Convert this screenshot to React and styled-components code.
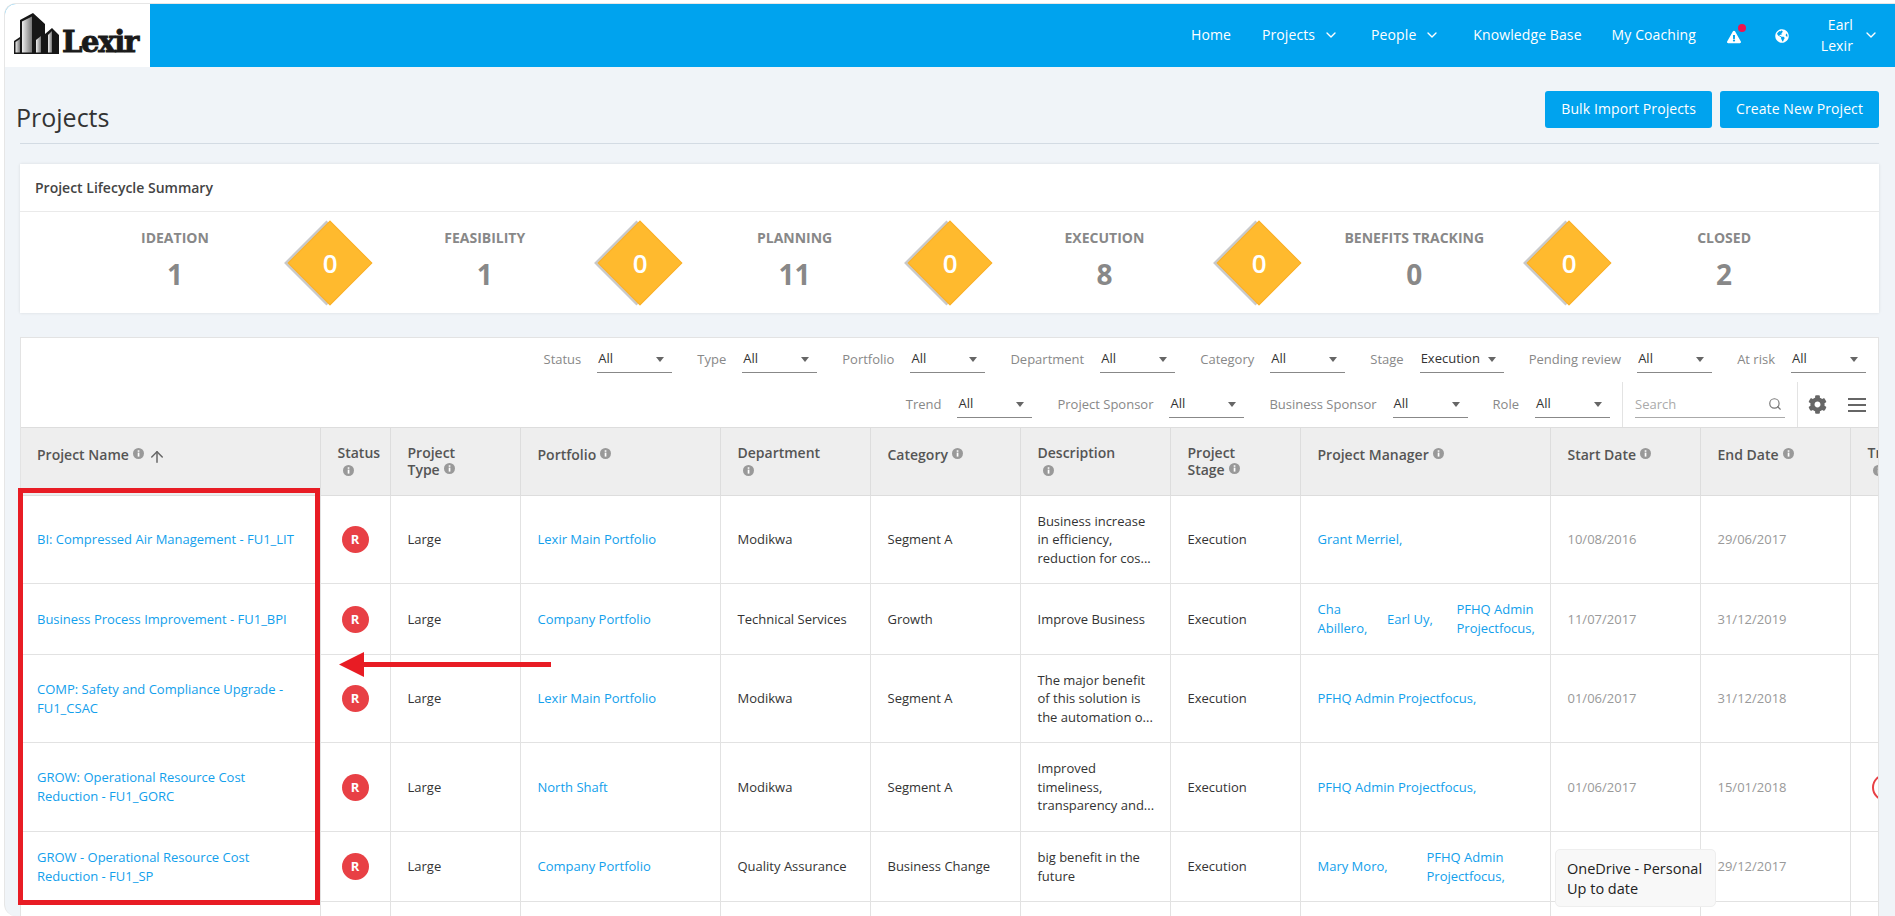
import React from "react";
import styled, { createGlobalStyle } from "styled-components";
import { ChevronDown, ArrowUp, Search } from "lucide-react";
import { FaCog, FaExclamationTriangle, FaGlobeAmericas } from "react-icons/fa";

const Global = createGlobalStyle`
  html, body { margin: 0; padding: 0; height: 916px; overflow: hidden; background: #fff; }
  body { font-family: "Open Sans", "Noto Sans", sans-serif; color: #333; }
  * { box-sizing: border-box; }
`;

const Root = styled.div`
  position: relative;
  width: 1895px;
  height: 916px;
  overflow: hidden;
  background: #fff;
  padding: 3px 0 0 4px;
`;
const Frame = styled.div`
  height: 913px;
  background: #f0f4f8;
  border-left: 1px solid #e6e6e6;
  border-top: 1px solid #e6e6e6;
  border-radius: 12px 0 0 12px;
  overflow: hidden;
`;
const TopBar = styled.header`
  height: 63px;
  display: flex;
  align-items: center;
  background: #00a3ee;
`;
const LogoBox = styled.div`
  width: 145px;
  height: 63px;
  background: #fff;
  display: flex;
  align-items: flex-end;
  padding: 0 0 12px 9px;
  gap: 2px;
`;
const LogoWord = styled.span`
  font-family: "DejaVu Serif", serif;
  font-weight: 700;
  font-size: 29px;
  line-height: 26px;
  color: #1a1a1a;
  -webkit-text-stroke: 0.9px #1a1a1a;
  letter-spacing: -1.3px;
`;
const Nav = styled.nav`
  margin-left: auto;
  display: flex;
  align-items: center;
  color: #fff;
  font-size: 14px;
  font-weight: 500;
  letter-spacing: 0.1px;
  height: 100%;
`;
const NavItem = styled.span`
  display: inline-flex;
  align-items: center;
  margin-top: -2px;
  margin-right: ${(p) => p.$mr}px;
  gap: ${(p) => p.$gap || 0}px;
  white-space: nowrap;
`;
const GlobeSlot = styled.span`
  display: inline-flex;
  margin-top: 1px;
  margin-right: 28px;
`;
const AlertWrap = styled.span`
  position: relative;
  display: inline-flex;
  margin-right: 34px;
  margin-top: 2px;
`;
const AlertDot = styled.span`
  position: absolute;
  width: 8px;
  height: 8px;
  border-radius: 50%;
  background: #f0134d;
  top: -6px;
  right: -5px;
`;
const UserName = styled.span`
  display: block;
  text-align: right;
  line-height: 21px;
  width: 36px;
  margin-top: -1px;
  margin-right: 10px;
`;
const ChevronSlot = styled.span`
  display: inline-flex;
  margin-top: -2px;
  margin-right: 16px;
`;
const Main = styled.main`
  padding: 0 16px 0 15px;
`;
const PageHead = styled.div`
  height: 77px;
  display: flex;
  justify-content: space-between;
  padding-top: 24px;
  border-bottom: 1px solid #d3dbe3;
`;
const Title = styled.h1`
  margin: 10px 0 0 -4px;
  font-size: 25px;
  font-weight: 400;
  line-height: 32px;
  color: #333;
`;
const Actions = styled.div`
  display: flex;
  gap: 8px;
`;
const ActionButton = styled.button`
  height: 37px;
  padding: 0 16px 2px;
  border: 0;
  border-radius: 3px;
  background: #00a3ee;
  color: #fff;
  font: 500 14px "Open Sans", sans-serif;
  letter-spacing: 0.1px;
  white-space: nowrap;
`;
const SummaryCard = styled.section`
  margin-top: 20px;
  height: 149px;
  background: #fff;
  box-shadow: 0 0 3px rgba(0, 0, 0, 0.1);
`;
const SummaryHead = styled.div`
  height: 48px;
  border-bottom: 1px solid #eaeaea;
  padding-left: 15px;
  font-size: 14px;
  font-weight: 600;
  color: #444;
  display: flex;
  align-items: center;
`;
const StageGrid = styled.div`
  display: grid;
  grid-template-columns: repeat(6, 1fr);
  height: 100px;
`;
const Stage = styled.div`
  position: relative;
  text-align: center;
  padding-top: 16px;
`;
const StageLabel = styled.div`
  font-size: 14px;
  font-weight: 700;
  line-height: 20px;
  color: #888;
`;
const StageCount = styled.div`
  margin-top: 6px;
  font-size: 28px;
  font-weight: 700;
  line-height: 40px;
  color: #888;
`;
const Diamond = styled.div`
  position: absolute;
  top: 21px;
  right: -30px;
  width: 60px;
  height: 60px;
  z-index: 1;
  transform: rotate(45deg);
  background: #ffba2e;
  border: 1px solid #fbb02a;
  box-shadow: -2.5px 2.5px 0 #c9c9c9;
  display: flex;
  align-items: center;
  justify-content: center;
`;
const DiamondValue = styled.span`
  transform: rotate(-45deg);
  color: #fff;
  font-size: 26px;
  font-weight: 600;
  line-height: 1;
`;
const TableCard = styled.section`
  margin-top: 24px;
  height: 600px;
  background: #fff;
  border: 1px solid #e3e3e3;
  border-bottom: 0;
  overflow: hidden;
`;
const FilterRow = styled.div`
  height: ${(p) => p.$h}px;
  display: flex;
  justify-content: flex-end;
  padding: 0 12px 0 0;
  font-size: 13px;
`;
const Filter = styled.div`
  display: flex;
  align-items: center;
  height: 28px;
  margin: ${(p) => p.$top}px 0 0 25px;
`;
const FilterLabel = styled.span`
  color: #888;
  margin-right: 16px;
  white-space: nowrap;
`;
const Select = styled.div`
  position: relative;
  width: ${(p) => p.$w || 75}px;
  height: 28px;
  border-bottom: 1px solid #888;
  color: #333;
  line-height: 27px;
  padding-left: 1px;
  &::after {
    content: "";
    position: absolute;
    right: 8px;
    top: 12px;
    border-left: 4.5px solid transparent;
    border-right: 4.5px solid transparent;
    border-top: 5px solid #666;
  }
`;
const ToolGroup = styled.div`
  display: flex;
  align-items: center;
  height: 45px;
  border-left: 1px solid #e3e3e3;
  margin-left: 12px;
  padding-left: ${(p) => p.$pl}px;
  gap: ${(p) => p.$gap || 0}px;
`;
const SearchBox = styled.div`
  width: 150px;
  height: 28px;
  margin-top: -1px;
  padding: 1px 3px 0 0;
  border-bottom: 1px solid #aaa;
  color: #aaa;
  display: flex;
  align-items: center;
  justify-content: space-between;
  font-size: 13px;
`;
const Hamburger = styled.span`
  display: block;
  width: 18px;
  height: 14px;
  border-top: 2px solid #666;
  border-bottom: 2px solid #666;
  position: relative;
  &::after {
    content: "";
    position: absolute;
    left: 0;
    right: 0;
    top: 4px;
    height: 2px;
    background: #666;
  }
`;
const TableScroll = styled.div`
  margin-left: -1px;
`;
const Table = styled.table`
  border-collapse: collapse;
  table-layout: fixed;
  width: 1980px;
  font-size: 13px;
  line-height: 18.6px;
`;
const HeadCell = styled.th`
  height: 68px;
  background: #eee;
  border: 1px solid #ddd;
  padding: ${(p) => (p.$single ? "18px" : "16px")} 17px 0;
  vertical-align: top;
  text-align: left;
  font-size: 14px;
  font-weight: 600;
  line-height: 17px;
  color: #555;
  &:first-child { border-left: 0; }
`;
const Cell = styled.td`
  border: 1px solid #e2e2e2;
  padding: 0 ${(p) => (p.$tight ? 13 : 17)}px 0 17px;
  vertical-align: middle;
  color: ${(p) => (p.$muted ? "#999" : "#333")};
  &:first-child { border-left: 0; }
`;
const Row = styled.tr`
  height: ${(p) => p.$h}px;
`;
const TextLink = styled.a`
  color: #12a0ec;
  text-decoration: none;
`;
const InfoDot = styled.svg`
  width: 11px;
  height: 11px;
  margin-left: ${(p) => (p.$wrapped ? 5 : 4)}px;
  vertical-align: ${(p) => (p.$wrapped ? "-1px" : "1px")};
`;
const SortIcon = styled(ArrowUp)`
  margin: -3px 0 -3px 4px;
  vertical-align: -3px;
  color: #666;
`;
const StatusBadge = styled.span`
  display: flex;
  width: 27px;
  height: 27px;
  border-radius: 50%;
  background: #e84045;
  color: #fff;
  font-size: 13px;
  font-weight: 700;
  align-items: center;
  justify-content: center;
  margin-left: 4px;
`;
const TrendRing = styled.span`
  display: block;
  width: 27px;
  height: 27px;
  border-radius: 50%;
  border: 2px solid #e84045;
  margin-left: 4px;
`;
const Managers = styled.div`
  display: grid;
  grid-template-columns: ${(p) => p.$cols};
  align-items: center;
`;
const Callout = styled.div`
  position: absolute;
  left: 18px;
  top: 488px;
  width: 302px;
  height: 417px;
  border: 5px solid #e81c24;
  pointer-events: none;
`;
const CalloutArrow = styled.svg`
  position: absolute;
  left: 339px;
  top: 652px;
  width: 212px;
  height: 25px;
`;
const Toast = styled.div`
  position: absolute;
  left: 1555px;
  top: 849px;
  width: 161px;
  height: 58px;
  padding: 9px 11px;
  background: #f8f8f8;
  border: 1px solid #eee;
  border-radius: 5px;
  color: #222;
  font-size: 14.5px;
  line-height: 20px;
  white-space: nowrap;
`;

const Info = ({ wrapped }) => (
  <InfoDot $wrapped={wrapped} viewBox="0 0 11 11">
    <circle cx="5.5" cy="5.5" r="5.5" fill="#999" />
    <rect x="4.7" y="4.6" width="1.7" height="4" fill="#fff" />
    <rect x="4.7" y="2.3" width="1.7" height="1.5" fill="#fff" />
  </InfoDot>
);

const LogoMark = () => (
  <svg width="46" height="42" viewBox="0 0 46 42">
    <defs>
      <linearGradient id="face" x1="0" y1="0" x2="1" y2="0">
        <stop offset="0" stopColor="#eee" />
        <stop offset="1" stopColor="#777" />
      </linearGradient>
    </defs>
    <path d="M0 28 L6 24 V7 L19 0 L31 11 V21 L38 15 L45 22 V41 H0Z" fill="#161616" />
    <path d="M1.5 29 L6 26 V39.5 H1.5Z" fill="url(#face)" />
    <path d="M8 8.5 L18 3.5 V39.5 H8Z" fill="url(#face)" />
    <path d="M22 27 L27 23 V39.5 H22Z" fill="url(#face)" />
    <path d="M34 22 L38 18 V39.5 H34Z" fill="url(#face)" />
  </svg>
);

const stages = [
  ["IDEATION", 1],
  ["FEASIBILITY", 1],
  ["PLANNING", 11],
  ["EXECUTION", 8],
  ["BENEFITS TRACKING", 0],
  ["CLOSED", 2],
];

const widths = [300, 70, 130, 200, 150, 150, 150, 130, 250, 150, 150, 150];

const PFHQ = "PFHQ Admin Projectfocus,";
const rows = [
  { h: 88, name: "BI: Compressed Air Management - FU1_LIT", portfolio: "Lexir Main Portfolio", dept: "Modikwa", cat: "Segment A", desc: "Business increase in efficiency, reduction for cos...", mgr: ["Grant Merriel,"], cols: "1fr", start: "10/08/2016", end: "29/06/2017" },
  { h: 71, name: "Business Process Improvement - FU1_BPI", portfolio: "Company Portfolio", dept: "Technical Services", cat: "Growth", desc: "Improve Business", mgr: ["Cha Abillero,", "Earl Uy,", PFHQ], cols: "69.5px 69.5px 1fr", start: "11/07/2017", end: "31/12/2019" },
  { h: 88, name: "COMP: Safety and Compliance Upgrade - FU1_CSAC", portfolio: "Lexir Main Portfolio", dept: "Modikwa", cat: "Segment A", desc: "The major benefit of this solution is the automation o...", mgr: [PFHQ], cols: "1fr", start: "01/06/2017", end: "31/12/2018" },
  { h: 89, name: "GROW: Operational Resource Cost Reduction - FU1_GORC", portfolio: "North Shaft", dept: "Modikwa", cat: "Segment A", desc: "Improved timeliness, transparency and...", mgr: [PFHQ], cols: "1fr", start: "01/06/2017", end: "15/01/2018", trend: true },
  { h: 70, name: "GROW - Operational Resource Cost Reduction - FU1_SP", portfolio: "Company Portfolio", dept: "Quality Assurance", cat: "Business Change", desc: "big benefit in the future", mgr: ["Mary Moro,", PFHQ], cols: "109px 1fr", start: "", end: "29/12/2017" },
  { h: 80, blank: true, mgr: [], cols: "1fr" },
];

const filtersTop = [
  ["Status", "All"], ["Type", "All"], ["Portfolio", "All"], ["Department", "All"], ["Category", "All"],
  ["Stage", "Execution", 84], ["Pending review", "All"], ["At risk", "All"],
];
const filtersBottom = [["Trend", "All"], ["Project Sponsor", "All"], ["Business Sponsor", "All"], ["Role", "All"]];

const FilterItem = ({ label, value, w, top }) => (
  <Filter $top={top}>
    <FilterLabel>{label}</FilterLabel>
    <Select $w={w}>{value}</Select>
  </Filter>
);

export default function App() {
  return (
    <Root>
      <Global />
      <Frame>
        <TopBar>
          <LogoBox>
            <LogoMark />
            <LogoWord>Lexir</LogoWord>
          </LogoBox>
          <Nav>
            <NavItem $mr={31}>Home</NavItem>
            <NavItem $mr={32} $gap={8}>Projects <ChevronDown size={16} /></NavItem>
            <NavItem $mr={33} $gap={8}>People <ChevronDown size={16} /></NavItem>
            <NavItem $mr={30}>Knowledge Base</NavItem>
            <NavItem $mr={31}>My Coaching</NavItem>
            <AlertWrap><FaExclamationTriangle size={14} /><AlertDot /></AlertWrap>
            <GlobeSlot><FaGlobeAmericas size={14} /></GlobeSlot>
            <UserName>Earl<br />Lexir</UserName>
            <ChevronSlot><ChevronDown size={16} /></ChevronSlot>
          </Nav>
        </TopBar>
        <Main>
          <PageHead>
            <Title>Projects</Title>
            <Actions>
              <ActionButton>Bulk Import Projects</ActionButton>
              <ActionButton>Create New Project</ActionButton>
            </Actions>
          </PageHead>
          <SummaryCard>
            <SummaryHead>Project Lifecycle Summary</SummaryHead>
            <StageGrid>
              {stages.map(([label, count], i) => (
                <Stage key={label}>
                  <StageLabel>{label}</StageLabel>
                  <StageCount>{count}</StageCount>
                  {i < 5 && <Diamond><DiamondValue>0</DiamondValue></Diamond>}
                </Stage>
              ))}
            </StageGrid>
          </SummaryCard>
          <TableCard>
            <FilterRow $h={44}>
              {filtersTop.map(([l, v, w]) => <FilterItem key={l} label={l} value={v} w={w} top={7} />)}
            </FilterRow>
            <FilterRow $h={45}>
              {filtersBottom.map(([l, v]) => <FilterItem key={l} label={l} value={v} top={8} />)}
              <ToolGroup $pl={12}>
                <SearchBox>Search <Search size={14} color="#777" /></SearchBox>
              </ToolGroup>
              <ToolGroup $pl={10} $gap={21}>
                <FaCog size={19} color="#666" />
                <Hamburger />
              </ToolGroup>
            </FilterRow>
            <TableScroll>
              <Table>
                <colgroup>
                  {widths.map((w, i) => <col key={i} style={{ width: w }} />)}
                </colgroup>
                <thead>
                  <tr>
                    <HeadCell $single>Project Name<Info /><SortIcon size={18} strokeWidth={2} /></HeadCell>
                    <HeadCell>Status<br /><Info wrapped /></HeadCell>
                    <HeadCell>Project<br />Type<Info /></HeadCell>
                    <HeadCell $single>Portfolio<Info /></HeadCell>
                    <HeadCell>Department<br /><Info wrapped /></HeadCell>
                    <HeadCell $single>Category<Info /></HeadCell>
                    <HeadCell>Description<br /><Info wrapped /></HeadCell>
                    <HeadCell>Project<br />Stage<Info /></HeadCell>
                    <HeadCell $single>Project Manager<Info /></HeadCell>
                    <HeadCell $single>Start Date<Info /></HeadCell>
                    <HeadCell $single>End Date<Info /></HeadCell>
                    <HeadCell>Trend<br /><Info wrapped /></HeadCell>
                  </tr>
                </thead>
                <tbody>
                  {rows.map((r, i) => (
                    <Row key={i} $h={r.h}>
                      <Cell>{r.name && <TextLink>{r.name}</TextLink>}</Cell>
                      <Cell>{!r.blank && <StatusBadge>R</StatusBadge>}</Cell>
                      <Cell>{!r.blank && "Large"}</Cell>
                      <Cell>{r.portfolio && <TextLink>{r.portfolio}</TextLink>}</Cell>
                      <Cell>{r.dept}</Cell>
                      <Cell>{r.cat}</Cell>
                      <Cell $tight>{r.desc}</Cell>
                      <Cell>{!r.blank && "Execution"}</Cell>
                      <Cell>
                        <Managers $cols={r.cols}>
                          {r.mgr.map((m) => <TextLink key={m}>{m}</TextLink>)}
                        </Managers>
                      </Cell>
                      <Cell $muted>{r.start}</Cell>
                      <Cell $muted>{r.end}</Cell>
                      <Cell>{r.trend && <TrendRing />}</Cell>
                    </Row>
                  ))}
                </tbody>
              </Table>
            </TableScroll>
          </TableCard>
        </Main>
      </Frame>
      <Callout />
      <CalloutArrow viewBox="0 0 212 25">
        <polygon points="0,12.5 25,0 25,10 212,10 212,15 25,15 25,25" fill="#e81c24" />
      </CalloutArrow>
      <Toast>OneDrive - Personal<br />Up to date</Toast>
    </Root>
  );
}
